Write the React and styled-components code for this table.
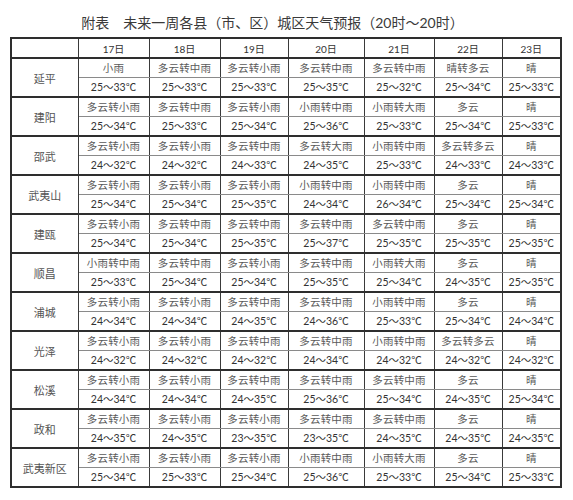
import React from "react";
import styled, { createGlobalStyle } from "styled-components";

const Global = createGlobalStyle`
  html, body { margin: 0; padding: 0; background: #fff; }
  body { font-family: Lato, "Noto Sans CJK SC", sans-serif; }
`;

const Page = styled.div`
  width: 573px;
  height: 500px;
  overflow: hidden;
  background: #fff;
`;

const Title = styled.div`
  height: 37px;
  box-sizing: border-box;
  padding: 13px 28px 0 0;
  text-align: center;
  font-size: 14px;
  line-height: 20px;
  color: #3a3a3a;
  font-family: Lato, "Noto Sans CJK SC", sans-serif;
  white-space: pre;
`;

const Table = styled.table`
  margin-left: 10px;
  width: 551px;
  table-layout: fixed;
  border-collapse: collapse;
  border: 2px solid #2e2e2e;
  font-family: Lato, "Noto Sans CJK SC", sans-serif;
`;

const HeadCell = styled.th`
  height: 18px;
  padding: 0;
  border: 1.5px solid #3a3a3a;
  font-weight: normal;
  font-size: 10px;
  color: #333;
  text-align: center;
  vertical-align: middle;
`;

const NameCell = styled.td`
  padding: 0;
  border-left: 2px solid #2e2e2e;
  border-right: 1.5px solid #3a3a3a;
  border-top: 2px solid #2e2e2e;
  border-bottom: 2px solid #2e2e2e;
  font-size: 11px;
  color: #555;
  text-align: center;
  vertical-align: middle;
`;

const Cell = styled.td`
  height: 18px;
  padding: 0;
  border-left: 1.5px solid #3a3a3a;
  border-right: 1.5px solid #3a3a3a;
  border-top: ${(p) => (p.$first ? "2px solid #2e2e2e" : "1px solid #8a8a8a")};
  border-bottom: ${(p) => (p.$first ? "1px solid #8a8a8a" : "2px solid #2e2e2e")};
  font-size: ${(p) => (p.$temp ? "10.5px" : "10.5px")};
  letter-spacing: ${(p) => (p.$temp ? "0" : "0.2px")};
  color: ${(p) => (p.$temp ? "#333" : "#5a5a5a")};
  text-align: center;
  vertical-align: middle;
  white-space: nowrap;
  line-height: 1;
`;

const widths = [67, 71, 71, 68, 76, 70, 68, 59];
const days = ["17日", "18日", "19日", "20日", "21日", "22日", "23日"];

const data = [
  ["延平", ["小雨", "多云转中雨", "多云转小雨", "多云转中雨", "多云转中雨", "晴转多云", "晴"], ["25～33℃", "25～33℃", "25～33℃", "25～35℃", "25～32℃", "25～34℃", "25～33℃"]],
  ["建阳", ["多云转小雨", "多云转中雨", "多云转小雨", "小雨转中雨", "小雨转大雨", "多云", "晴"], ["25～34℃", "25～33℃", "25～34℃", "25～36℃", "25～33℃", "25～34℃", "25～33℃"]],
  ["邵武", ["多云转小雨", "多云转小雨", "多云转中雨", "多云转大雨", "小雨转中雨", "多云转多云", "晴"], ["24～32℃", "24～32℃", "24～33℃", "24～35℃", "25～33℃", "24～33℃", "24～33℃"]],
  ["武夷山", ["多云转小雨", "多云转小雨", "多云转小雨", "小雨转中雨", "小雨转中雨", "多云", "晴"], ["25～34℃", "25～34℃", "25～35℃", "24～34℃", "26～34℃", "25～34℃", "25～34℃"]],
  ["建瓯", ["多云转小雨", "多云转中雨", "多云转中雨", "多云转中雨", "多云转中雨", "多云", "晴"], ["25～34℃", "25～34℃", "25～35℃", "25～37℃", "25～35℃", "25～35℃", "25～35℃"]],
  ["顺昌", ["小雨转中雨", "多云转中雨", "多云转小雨", "多云转中雨", "小雨转大雨", "多云", "晴"], ["25～33℃", "25～34℃", "25～34℃", "25～35℃", "25～34℃", "24～35℃", "25～35℃"]],
  ["浦城", ["多云转小雨", "多云转小雨", "多云转中雨", "多云转中雨", "小雨转中雨", "多云", "晴"], ["24～34℃", "24～34℃", "24～35℃", "24～36℃", "25～33℃", "25～34℃", "24～34℃"]],
  ["光泽", ["多云转小雨", "多云转小雨", "多云转中雨", "多云转中雨", "小雨转中雨", "多云转多云", "晴"], ["24～32℃", "24～32℃", "24～32℃", "24～34℃", "24～32℃", "24～32℃", "24～32℃"]],
  ["松溪", ["多云转小雨", "多云转小雨", "多云转中雨", "多云转中雨", "多云转中雨", "多云", "晴"], ["24～34℃", "24～34℃", "24～35℃", "25～36℃", "25～34℃", "24～35℃", "25～34℃"]],
  ["政和", ["多云转小雨", "多云转小雨", "多云转小雨", "多云转中雨", "多云转中雨", "多云", "晴"], ["24～35℃", "24～35℃", "23～35℃", "23～35℃", "24～35℃", "24～35℃", "24～35℃"]],
  ["武夷新区", ["多云转小雨", "多云转小雨", "多云转小雨", "小雨转中雨", "小雨转大雨", "多云", "晴"], ["25～34℃", "25～33℃", "25～34℃", "25～36℃", "25～33℃", "25～34℃", "25～33℃"]],
];

export default function App() {
  return (
    <Page>
      <Global />
      <Title>附表　未来一周各县（市、区）城区天气预报（20时～20时）</Title>
      <Table>
        <colgroup>
          {widths.map((w, i) => (
            <col key={i} style={{ width: w }} />
          ))}
        </colgroup>
        <thead>
          <tr>
            <HeadCell />
            {days.map((d) => (
              <HeadCell key={d}>{d}</HeadCell>
            ))}
          </tr>
        </thead>
        <tbody>
          {data.map(([name, weather, temps]) => (
            <React.Fragment key={name}>
              <tr>
                <NameCell rowSpan={2}>{name}</NameCell>
                {weather.map((w, i) => (
                  <Cell key={i} $first>
                    {w}
                  </Cell>
                ))}
              </tr>
              <tr>
                {temps.map((t, i) => (
                  <Cell key={i} $temp>
                    {t}
                  </Cell>
                ))}
              </tr>
            </React.Fragment>
          ))}
        </tbody>
      </Table>
    </Page>
  );
}
